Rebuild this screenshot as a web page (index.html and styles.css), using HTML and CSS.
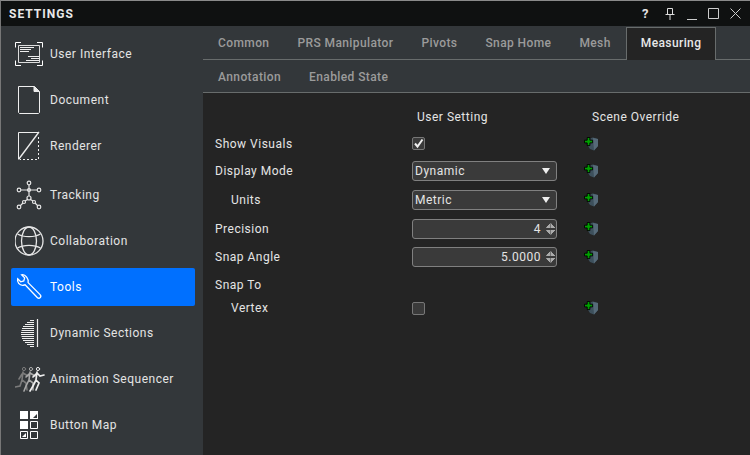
FILE: index.html
```html
<!DOCTYPE html>
<html lang="en">
<head>
    <meta charset="UTF-8">
    <title>Settings</title>
    <link rel="stylesheet" href="styles.css">
</head>
<body>
    <div class="window">
        <div class="titlebar">
            <span class="title">SETTINGS</span>
            <div class="win-buttons">
                <span class="help">?</span>
                <svg width="12" height="14" viewBox="0 0 12 14"><path d="M3.500 1.500h5v6h-5zM1.500 7.500h9M6 8v5" fill="none" stroke="#ddd"/></svg>
                <svg width="12" height="14" viewBox="0 0 12 14"><path d="M1 12.500h10" stroke="#ccc"/></svg>
                <svg width="12" height="14" viewBox="0 0 12 14"><path d="M.5 1.500h10v10H.5z" fill="none" stroke="#ccc"/></svg>
                <svg width="12" height="14" viewBox="0 0 12 14"><path d="M.5 1.500l10 10M10.500 1.500l-10 10" fill="none" stroke="#ccc"/></svg>
            </div>
        </div>
        <div class="body">
            <nav class="sidebar">
                <a class="nav-item">
                    <svg width="30" height="26" viewBox="0 0 30 26" fill="none" stroke="#fff">
                        <path d="M6 1.500H.5v5M22 1.500h5.500v5M.5 19.500v5H6M27.500 19.500v5H22"/>
                        <path d="M3.500 4.500h21v17h-21z" stroke="#ddd"/>
                        <path d="M5 6.500h14M5 8.500h11M5 10.500h9M13 15.500h11M16 17.500h8M11 19.500h13" stroke="#eee"/>
                    </svg>
                    <span>User Interface</span>
                </a>
                <a class="nav-item">
                    <svg width="30" height="30" viewBox="1 0 30 30" fill="none" stroke="#eee">
                        <path d="M4.500 1.500h16l5 5v21l-1 1h-19l-1-1z"/>
                        <path d="M20 1.500l5 5h-5z" fill="#eee"/>
                    </svg>
                    <span>Document</span>
                </a>
                <a class="nav-item">
                    <svg width="30" height="30" viewBox="1 0 30 30" fill="none" stroke="#eee">
                        <path d="M4.500 28V1.500H24"/>
                        <path d="M4.500 28.500L25 1" stroke-width="1.300"/>
                        <path d="M24.500 6v22.500H6" stroke-dasharray="2 2"/>
                    </svg>
                    <span>Renderer</span>
                </a>
                <a class="nav-item nav-tracking">
                    <svg width="30" height="30" viewBox="1 0 30 30" fill="none" stroke="#e6e6e6" stroke-width="1.200">
                        <circle cx="15" cy="3" r="1.800"/>
                        <circle cx="5" cy="10" r="1.800"/>
                        <circle cx="25" cy="10" r="1.800"/>
                        <circle cx="15" cy="10" r="1.500"/>
                        <circle cx="15" cy="18" r="2"/>
                        <circle cx="10" cy="22" r="1.500"/>
                        <circle cx="20" cy="22" r="1.500"/>
                        <circle cx="5" cy="27" r="1.800"/>
                        <circle cx="25" cy="27" r="1.800"/>
                        <path d="M15 5v11M7 10h16M13.500 19.500l-2.500 1.500M16.500 19.500l2.500 1.500M9 23l-3 3M21 23l3 3"/>
                    </svg>
                    <span>Tracking</span>
                </a>
                <a class="nav-item">
                    <svg width="30" height="30" viewBox="1 0 30 30" fill="none" stroke="#e6e6e6" stroke-width="1.300">
                        <circle cx="15" cy="15" r="14"/>
                        <ellipse cx="15" cy="15" rx="7.500" ry="14"/>
                        <path d="M3.500 8c6 3.500 17 3.500 23 0M3.500 22c6-3.500 17-3.500 23 0"/>
                    </svg>
                    <span>Collaboration</span>
                </a>
                <a class="nav-item active">
                    <svg width="30" height="30" viewBox="0 0 30 30" fill="none" stroke="#fff" stroke-width="1.500">
                        <path d="M7 1.500L10.500 5l-1 3.500-3.500 1L2.500 6C1.500 10 4.500 14 9 13.500l2-.5 14 14.500c1 1 2.500 1 3.500 0s.5-2.500-.5-3.500L14.500 10.500c1-4-3-10-7.500-9z" transform="translate(.5 1.500) scale(.87)"/>
                    </svg>
                    <span>Tools</span>
                </a>
                <a class="nav-item">
                    <svg width="30" height="30" viewBox="1 0 30 30" fill="none" stroke="#eee">
                        <path d="M23.500 1v28" stroke-width="1.200"/>
                        <path d="M16 2.500h4M13 4.500h7M11 6.500h9M9 8.500h11M8 10.500h12M7.500 12.500h12.500M7 14.500h13M7 16.500h13M7.500 18.500h12.500M8 20.500h12M9 22.500h11M11 24.500h9M13 26.500h7M16 28.500h4"/>
                    </svg>
                    <span>Dynamic Sections</span>
                </a>
                <a class="nav-item">
                    <svg width="30" height="30" viewBox="0 -1 30 30" fill="none" stroke-linecap="round">
                        <g stroke="#7b7b7b" stroke-width="1.600"><circle cx="9" cy="4" r="1.600" stroke-width="1"/><path d="M8 7l-1 8 4 3 1 7M7 15l-2 6-5 1M7 9l-3 5M8 8l5 3"/></g>
                        <g stroke="#a9a9a9" stroke-width="1.600"><circle cx="16" cy="4" r="1.600" stroke-width="1"/><path d="M15 7l-1 8 4 3 0 7M14 15l-3 6-2 5M14 9l-3 3M15 8l5 3"/></g>
                        <g stroke="#eee" stroke-width="1.700"><circle cx="23" cy="4" r="1.600" stroke-width="1"/><path d="M22 7l-1 8 3 3-3 7M21 15l-3 6-3 5M21 9l-3 3M22 8l3 3 4-1"/></g>
                    </svg>
                    <span>Animation Sequencer</span>
                </a>
                <a class="nav-item">
                    <svg width="30" height="30" viewBox="0 0 30 30" fill="none" stroke="#fff">
                        <path d="M5 1h8v8H5zM5 11h8v8H5zM15 1h8v8h-8z" fill="#fff" stroke="none"/>
                        <path d="M22 4v4h-4z" fill="#33373a" stroke="none"/>
                        <path d="M15.500 11.500h7v7h-7zM15.500 21.500h7v7h-7zM5.500 21.500h7v7h-7z"/>
                        <path d="M7 27l4-4v4z" fill="#fff" stroke="none"/>
                    </svg>
                    <span>Button Map</span>
                </a>
            </nav>
            <main class="main">
                <div class="tab-row tab-row-first">
                    <span class="tab">Common</span>
                    <span class="tab">PRS Manipulator</span>
                    <span class="tab">Pivots</span>
                    <span class="tab">Snap Home</span>
                    <span class="tab">Mesh</span>
                    <span class="tab tab-active">Measuring</span>
                </div>
                <div class="tab-row">
                    <span class="tab">Annotation</span>
                    <span class="tab">Enabled State</span>
                </div>
                <div class="form">
                    <span></span><span class="head">User Setting</span><span class="head">Scene Override</span>

                    <span>Show Visuals</span>
                    <span class="check"><svg width="11" height="11" viewBox="0 0 11 11"><path d="M2 5.500l2.500 3L9.500 1.500" fill="none" stroke="#eee" stroke-width="2"/></svg></span>
                    <svg class="override"><use href="#override"/></svg>

                    <span>Display Mode</span>
                    <span class="field select">Dynamic<i class="arrow"></i></span>
                    <svg class="override"><use href="#override"/></svg>

                    <span class="indent">Units</span>
                    <span class="field select">Metric<i class="arrow"></i></span>
                    <svg class="override"><use href="#override"/></svg>

                    <span>Precision</span>
                    <span class="field spin">4<i class="spin-arrows"></i></span>
                    <svg class="override"><use href="#override"/></svg>

                    <span>Snap Angle</span>
                    <span class="field spin">5.0000<i class="spin-arrows"></i></span>
                    <svg class="override"><use href="#override"/></svg>

                    <span>Snap To</span><span></span><span></span>

                    <span class="indent">Vertex</span>
                    <span class="check"></span>
                    <svg class="override"><use href="#override"/></svg>
                </div>
            </main>
        </div>
    </div>

    <svg class="defs" width="0" height="0">
        <symbol id="override" viewBox="0 0 15 14">
            <path d="M4 2l5-1.500L14 2v7l-4 4.500L6 12 4 9z" fill="#3d505c"/>
            <path d="M9 1l5 1v7l-4 4.500z" fill="#566a78"/>
            <path d="M3 0h3v3h3v3H6v3H3V6H0V3h3z" fill="#00a000" stroke="#000" stroke-width="1" transform="translate(.5 .5) scale(.9)"/>
        </symbol>
    </svg>
</body>
</html>
```

FILE: styles.css
```css
* {
    box-sizing: border-box;
}
body {
    margin: 0;
    font-family: 'Roboto', sans-serif;
    font-size: 12px;
    letter-spacing: 0.5px;
    color: #e4e4e4;
    background: #242424;
}
.window {
    width: 750px;
    height: 455px;
    display: flex;
    flex-direction: column;
    overflow: hidden;
    border-top: 1px solid #8a8a8a;
    border-left: 1px solid #777;
}
.titlebar {
    height: 25px;
    flex: none;
    display: flex;
    align-items: center;
    justify-content: space-between;
    padding: 0 8px 0 8px;
    background: #0f1111;
}
.title {
    font-size: 12px;
    font-weight: 700;
    letter-spacing: 1px;
    color: #e8e8e8;
}
.win-buttons {
    display: flex;
    align-items: center;
    gap: 10px;
}
.help {
    font-weight: 700;
    font-size: 13px;
    margin-right: 5px;
}
.body {
    flex: 1;
    display: flex;
    min-height: 0;
}
.sidebar {
    width: 202px;
    flex: none;
    display: flex;
    flex-direction: column;
    gap: 8px;
    padding: 9px 8px 0 10px;
    background: #33373a;
}
.nav-item {
    height: 38px;
    flex: none;
    display: flex;
    align-items: center;
    gap: 5px;
    padding-left: 4px;
    border-radius: 2px;
}
.nav-item svg {
    flex: none;
}
.nav-tracking {
    margin-top: 3px;
}
.active {
    background: #0070ff;
    color: #fff;
}
.main {
    flex: 1;
    display: flex;
    flex-direction: column;
}
.tab-row {
    height: 33px;
    flex: none;
    display: flex;
    padding-left: 1px;
    background: #33373a;
    border-bottom: 1px solid #686c6c;
    font-size: 12px;
    font-weight: 500;
    letter-spacing: 0.4px;
    color: #9b9b9b;
}
.tab-row-first {
    height: 34px;
}
.tab {
    display: flex;
    align-items: center;
    padding: 1px 14px 0;
}
.tab-active {
    height: 33px;
    margin: 1px 0 -1px 1px;
    padding: 0 14px 2px;
    background: #242424;
    border: 1px solid #686c6c;
    border-bottom: 0;
    color: #e8e8e8;
}
.form {
    display: grid;
    grid-template-columns: 167px 145px 1fr;
    grid-template-rows: 26px 27px 28px 30px 28px 28px 27px 20px;
    column-gap: 30px;
    align-items: center;
    margin-top: 11px;
    padding-left: 12px;
}
.head {
    padding-left: 5px;
}
.head:last-of-type {
    padding-left: 0;
}
.indent {
    padding-left: 16px;
}
.check {
    width: 13px;
    height: 13px;
    display: flex;
    align-items: center;
    justify-content: center;
    background: #3a3a3a;
    border: 1px solid #777;
    border-radius: 2px;
}
.field {
    height: 20px;
    display: flex;
    align-items: center;
    background: #3a3a3a;
    border: 1px solid #808080;
    border-radius: 3px;
}
.select {
    justify-content: space-between;
    padding: 0 6px 0 2px;
}
.arrow {
    width: 0;
    height: 0;
    border-left: 4.500px solid transparent;
    border-right: 4.500px solid transparent;
    border-top: 6px solid #eee;
}
.spin {
    justify-content: flex-end;
    padding-right: 1px;
}
.spin-arrows {
    width: 9px;
    height: 12px;
    margin-left: 5px;
    background:
        linear-gradient(to bottom right, transparent 49%, #aaa 51%) left top / 50% 5px no-repeat,
        linear-gradient(to bottom left, transparent 49%, #aaa 51%) right top / 50% 5px no-repeat,
        linear-gradient(to top right, transparent 49%, #aaa 51%) left bottom / 50% 5px no-repeat,
        linear-gradient(to top left, transparent 49%, #aaa 51%) right bottom / 50% 5px no-repeat;
}
.override {
    width: 15px;
    height: 14px;
    margin-left: -3px;
}
.defs {
    position: absolute;
}
```
